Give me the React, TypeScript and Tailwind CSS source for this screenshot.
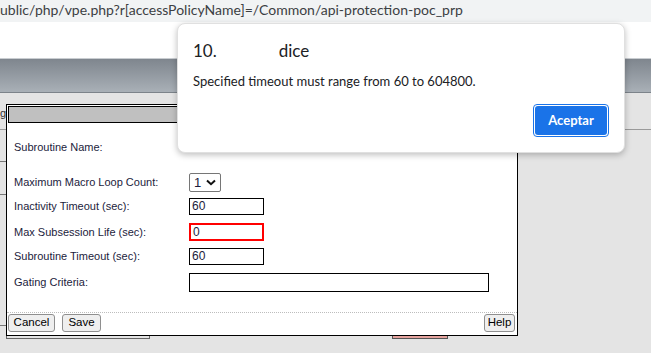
import React from 'react';

const labelCls = 'w-[175px] shrink-0 text-[11px] text-[#1c1c3c]';
const inputCls = 'h-[17px] w-[75px] border border-black bg-white pl-[2px] text-[12px] leading-[15px] text-[#1c1c3c]';
const btnCls = 'flex h-[18px] items-center justify-center rounded-[3px] border border-[#8f8f8f] bg-[#efefef] px-0 text-[11.5px] text-black';

const Row: React.FC<{ label: string; className: string; children?: React.ReactNode }> = ({ label, className, children }) => (
  <div className={`flex items-center pl-[7px] ${className}`}>
    <div className={labelCls}>{label}</div>
    {children}
  </div>
);

const App: React.FC = () => {
  return (
    <div className="relative h-[353px] w-[651px] overflow-hidden bg-[#e4e4e4]" style={{ fontFamily: '"Liberation Sans", Arial, sans-serif' }}>
      {/* browser address bar */}
      <div className="flex h-[22px] items-center bg-[#f1f3f4] text-[14px] text-[#3c4043]" style={{ fontFamily: 'Lato, "Open Sans", sans-serif' }}>
        <span className="-mt-[3px] whitespace-nowrap">ublic/php/vpe.php?r[accessPolicyName]=/Common/api-protection-poc_prp</span>
      </div>
      <div className="h-[36px] bg-white" />
      {/* header band */}
      <div className="h-[35px] border-t border-[#c9cdd1] border-b border-b-[#7c838a] bg-gradient-to-b from-[#7f868e] to-[#a9b0b7]" />

      {/* page content behind the dialogs */}
      <div className="h-[37px] border-b border-[#9a9a9a] pt-[12px] text-[11px] text-[#333]">
        <span>g:</span>
      </div>
      <div className="w-[150px]">
        <div className="h-[32px] w-[8px] border-b border-[#777]" />
        <div className="h-[33px] w-[8px] border-b border-[#777]" />
        <div className="h-[131px] w-[8px] border-b border-[#777]" />
        <div className="ml-[6px] h-[13px] border-x border-b border-[#666] bg-[#e4e4e4]" />
      </div>

      {/* pink element under window */}
      <div className="absolute left-[392px] top-[330px] h-[9px] w-[56px] border border-[#555] bg-[#e6a49f]" />

      {/* subroutine properties window */}
      <div className="absolute left-[6px] top-[104px] flex h-[232px] w-[512px] flex-col border border-black bg-white">
        <div className="mx-px mt-px h-[17px] border border-black bg-[#c0c0c0]" />
        <Row label="Subroutine Name:" className="mt-[14px] h-[20px]" />
        <Row label="Maximum Macro Loop Count:" className="mt-[16px] h-[19px]">
          <div className="flex h-[19px] w-[32px] items-center justify-between rounded-[2px] border border-[#767676] pl-[4px] pr-[4px] text-[13px] text-[#1c1c3c]">
            <span>1</span>
            <svg width="10" height="7" viewBox="0 0 10 7">
              <path d="M1 1.5 L5 5.2 L9 1.5" fill="none" stroke="#111" strokeWidth="2" />
            </svg>
          </div>
        </Row>
        <Row label="Inactivity Timeout (sec):" className="mt-[6px] h-[17px]">
          <div className={inputCls}>60</div>
        </Row>
        <Row label="Max Subsession Life (sec):" className="mt-[8px] h-[18px]">
          <div className="h-[18px] w-[75px] border-2 border-[#ff0000] bg-white pl-[2px] text-[12px] leading-[14px] text-[#1c1c3c]">0</div>
        </Row>
        <Row label="Subroutine Timeout (sec):" className="mt-[7px] h-[17px]">
          <div className={inputCls}>60</div>
        </Row>
        <Row label="Gating Criteria:" className="mt-[8px] h-[19px]">
          <div className="h-[19px] w-[300px] border border-black bg-white" />
        </Row>
        <div className="mt-[20px] border-t border-dotted border-[#bdbdbd]" />
        <div className="mt-px flex items-center pl-px pr-[2px]">
          <button className={`${btnCls} w-[47px]`}>Cancel</button>
          <button className={`${btnCls} ml-[7px] w-[39px]`}>Save</button>
          <button className={`${btnCls} ml-auto w-[31px]`}>Help</button>
        </div>
      </div>

      {/* browser alert */}
      <div
        className="absolute left-[177px] top-[23px] flex h-[130px] w-[448px] flex-col rounded-[8px] border border-[#e0e0e0] bg-white px-[15px] pb-[15px] pt-[17px] shadow-[0_2px_6px_rgba(0,0,0,0.25)]"
        style={{ fontFamily: 'Lato, "Open Sans", sans-serif' }}
      >
        <div className="flex text-[17px] leading-[20px] text-[#202124]">
          <span>10.</span>
          <span className="ml-[62px]">dice</span>
        </div>
        <div className="mt-[10px] text-[13px] leading-[20px] text-[#202124]">Specified timeout must range from 60 to 604800.</div>
        <div className="mt-auto flex justify-end">
          <button className="h-[33px] w-[76px] rounded-[4px] border border-[#1a73e8] bg-white p-px">
            <span className="flex h-full w-full items-center justify-center rounded-[3px] bg-[#1a73e8] text-[13px] font-bold text-white">Aceptar</span>
          </button>
        </div>
      </div>
    </div>
  );
};

export default App;
